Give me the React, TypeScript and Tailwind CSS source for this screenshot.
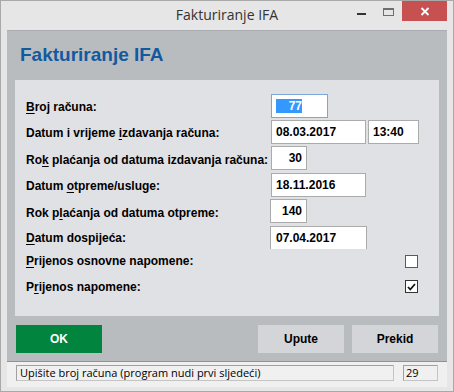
import React from "react";

const label = "font-['Liberation_Sans',Arial,sans-serif] text-[12px] font-bold text-black";
const field =
  "box-border flex h-full items-center border border-[#ababab] bg-white font-['Liberation_Sans',Arial,sans-serif] text-[12px] font-bold text-black";

function U({ children }: { children: React.ReactNode }) {
  return <span className="underline decoration-1 underline-offset-[2px]">{children}</span>;
}

function Row({ h, children, field: f }: { h: string; children: React.ReactNode; field?: React.ReactNode }) {
  return (
    <div className={`flex ${h}`}>
      <div className={`flex w-[245px] items-center ${label}`}>{children}</div>
      {f}
    </div>
  );
}

function Checkbox({ checked }: { checked?: boolean }) {
  return (
    <div
      className={`flex h-[13px] w-[13px] items-center justify-center border bg-white ${
        checked ? "border-[#333333]" : "border-[#5a5a5a]"
      }`}
    >
      {checked && (
        <svg width="9" height="8" viewBox="0 0 9 8">
          <path d="M1 4 L3.3 6.5 L8 1" fill="none" stroke="#111" strokeWidth="1.8" />
        </svg>
      )}
    </div>
  );
}

export default function App() {
  return (
    <div className="box-border flex h-[392px] w-[454px] flex-col border border-[#a9a9a9] bg-[#e6e6e6]">
      {/* Title bar */}
      <div className="relative flex h-[29px] items-center justify-center">
        <span className="font-['Open_Sans','Noto_Sans',sans-serif] text-[14px] text-[#333] mt-[-2px]">
          Fakturiranje IFA
        </span>
        <div className="absolute right-[6px] top-0 flex items-start">
          <div className="mt-[12px] mr-[17px] h-[2px] w-[9px] bg-[#333]" />
          <div className="mt-[7px] mr-[8px] box-border h-[8px] w-[11px] border border-t-2 border-[#6e6e6e]" />
          <div className="flex h-[20px] w-[45px] items-center justify-center bg-[#c75050]">
            <svg width="10" height="9" viewBox="0 0 10 9">
              <path d="M1.5 1 L8.5 8 M8.5 1 L1.5 8" stroke="white" strokeWidth="1.8" />
            </svg>
          </div>
        </div>
      </div>

      {/* Client area */}
      <div className="mx-[6px] flex flex-1 flex-col">
        <div className="flex flex-col border-t border-[#a9adb1] bg-[#b9bcbf] pb-[8px]">
          <h1 className="mt-[13px] pl-[13px] font-['Liberation_Sans',Arial,sans-serif] text-[19px] font-bold leading-[22px] text-[#125a9f]">
            Fakturiranje IFA
          </h1>

          <div className="mx-[8px] mt-[14px] flex h-[236px] flex-col bg-[#e0e1e4] pl-[11px] pt-[14px]">
            <Row
              h="h-[26px]"
              field={
                <div className="h-[25px] w-[57px] pb-[1px]">
                  <div className={`${field} !border-[#7aa6dc] pl-[4px]`}>
                    <span className="w-[26px] bg-[#3399ff] pr-[0px] text-right leading-[14px] text-white">77</span>
                  </div>
                </div>
              }
            >
              <span>
                <U>B</U>roj računa:
              </span>
            </Row>
            <Row
              h="h-[26px]"
              field={
                <div className="flex h-[24px] gap-[2px]">
                  <div className={`${field} w-[95px] pl-[4px]`}>08.03.2017</div>
                  <div className={`${field} w-[51px] pl-[4px]`}>13:40</div>
                </div>
              }
            >
              <span>
                Datum i vrijeme <U>i</U>zdavanja računa:
              </span>
            </Row>
            <Row
              h="h-[27px]"
              field={
                <div className="h-[24px]">
                  <div className={`${field} w-[36px] justify-end pr-[4px]`}>30</div>
                </div>
              }
            >
              <span>
                Ro<U>k</U> plaćanja od datuma izdavanja računa:
              </span>
            </Row>
            <Row
              h="h-[26px]"
              field={
                <div className="h-[24px]">
                  <div className={`${field} w-[95px] pl-[4px]`}>18.11.2016</div>
                </div>
              }
            >
              <span>
                Datum <U>o</U>tpreme/usluge:
              </span>
            </Row>
            <Row
              h="h-[27px]"
              field={
                <div className="h-[24px] -ml-[1px]">
                  <div className={`${field} w-[37px] justify-end pr-[4px]`}>140</div>
                </div>
              }
            >
              <span>
                Rok p<U>l</U>aćanja od datuma otpreme:
              </span>
            </Row>
            <Row
              h="h-[23px]"
              field={
                <div className="h-[23px] -ml-[1px]">
                  <div className={`${field} w-[97px] border-b-0 pl-[5px]`}>07.04.2017</div>
                </div>
              }
            >
              <span>
                <U>D</U>atum dospijeća:
              </span>
            </Row>
            <div className="flex h-[23px] items-center pr-[21px]">
              <span className={label}>
                <U>P</U>rijenos osnovne napomene:
              </span>
              <div className="ml-auto mt-[1px]">
                <Checkbox />
              </div>
            </div>
            <div className="flex h-[29px] items-center pr-[21px]">
              <span className={label}>
                P<U>r</U>ijenos napomene:
              </span>
              <div className="ml-auto">
                <Checkbox checked />
              </div>
            </div>
          </div>

          <div className="mt-[9px] flex gap-[8px] px-[9px] font-['Liberation_Sans',Arial,sans-serif] text-[12px] font-bold">
            <button className="h-[28px] w-[86px] bg-[#00843e] text-white">OK</button>
            <div className="flex-1" />
            <button className="h-[28px] w-[86px] bg-[#d3d5d8] text-black">Upute</button>
            <button className="h-[28px] w-[86px] bg-[#d3d5d8] text-black">Prekid</button>
          </div>
        </div>

        {/* Status bar */}
        <div className="flex h-[26px] gap-[9px] border-t border-[#8f9296] bg-[#f0f0f0] pl-[9px] pr-[9px] pt-[3px]">
          <div className="box-border flex h-[16px] flex-1 items-center border border-[#c4c4c4] border-l-[#a0a0a0] border-t-[#a0a0a0] pl-[3px] font-['Open_Sans','Noto_Sans',sans-serif] text-[11px] text-black">
            Upišite broj računa (program nudi prvi sljedeći)
          </div>
          <div className="box-border flex h-[16px] w-[35px] items-center border border-[#c4c4c4] border-l-[#a0a0a0] border-t-[#a0a0a0] pl-[2px] font-['Open_Sans','Noto_Sans',sans-serif] text-[11px] text-black">
            29
          </div>
        </div>
      </div>
    </div>
  );
}
